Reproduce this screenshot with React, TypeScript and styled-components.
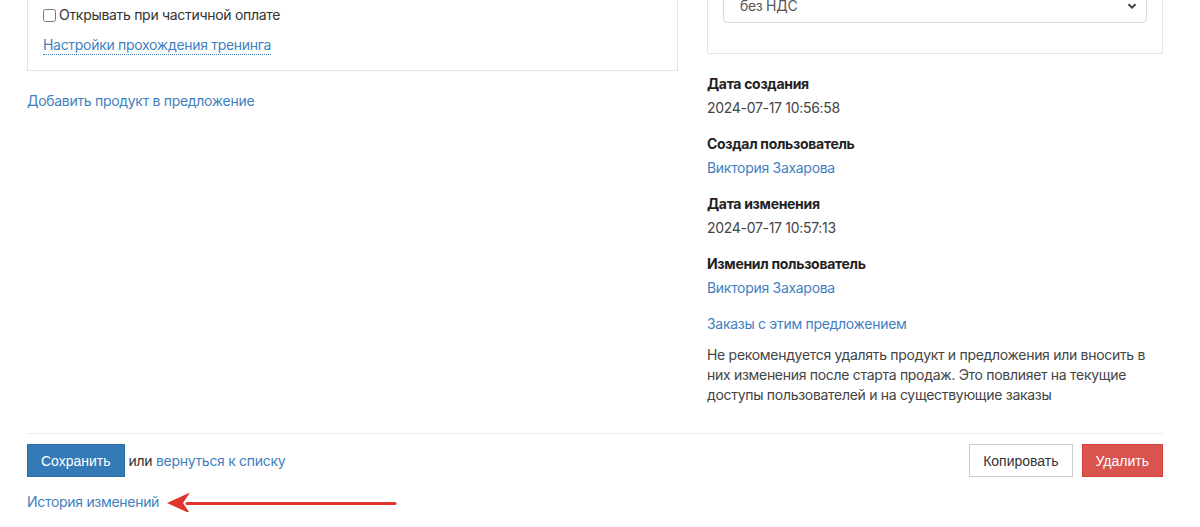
import React from "react";
import styled, { createGlobalStyle } from "styled-components";

const GlobalStyle = createGlobalStyle`
  html, body {
    margin: 0;
    padding: 0;
    background: #fff;
  }
  body {
    font-family: Inter, "Noto Sans", Arial, sans-serif;
    font-size: 14px;
    line-height: 20px;
    letter-spacing: -0.3px;
    color: #333;
    overflow: hidden;
  }
`;

const Page = styled.div`
  margin-top: -11px;
  padding: 0 37px 0 27px;
`;

const Columns = styled.div`
  display: grid;
  grid-template-columns: 651px 456px;
  column-gap: 29px;
  align-items: start;
`;

const Column = styled.div`
  display: flex;
  flex-direction: column;
`;

const Panel = styled.div<{ $padTop: number; $padBottom: number }>`
  border: 1px solid #e3e3e3;
  border-top: none;
  padding: ${({ $padTop }) => $padTop}px 15px ${({ $padBottom }) => $padBottom}px;
  display: flex;
  flex-direction: column;
`;

const CheckRow = styled.label`
  display: flex;
  align-items: center;
  gap: 3px;
  color: #333;
  cursor: pointer;

  input {
    width: 13px;
    height: 13px;
    margin: 0;
  }
`;

const Link = styled.a`
  color: #3f7fbf;
  text-decoration: none;
  cursor: pointer;
`;

const DottedLink = styled(Link)`
  align-self: flex-start;
  margin-top: 10px;
  border-bottom: 1px dotted #3f7fbf;
  line-height: 19px;
`;

const AddLink = styled(Link)`
  margin-top: 20px;
  align-self: flex-start;
`;

const Select = styled.div`
  height: 34px;
  border: 1px solid #d9d9d9;
  border-radius: 4px;
  box-sizing: border-box;
  display: flex;
  align-items: center;
  justify-content: space-between;
  padding: 0 8px 0 16px;
  color: #555;
`;

const InfoList = styled.div`
  margin-top: 20px;
  display: flex;
  flex-direction: column;
`;

const InfoItem = styled.div`
  display: flex;
  flex-direction: column;
  gap: 4px;
  margin-bottom: 16px;
`;

const InfoLabel = styled.div`
  font-weight: 700;
  color: #222;
`;

const InfoValue = styled.div`
  color: #444;
`;

const Note = styled.p`
  margin: 11px 0 0;
  color: #444;
  padding-right: 6px;
`;

const Divider = styled.hr`
  border: none;
  border-top: 1px solid #eee;
  margin: 28px 0 10px;
`;

const Actions = styled.div`
  display: flex;
  align-items: center;
  justify-content: space-between;
`;

const ActionGroup = styled.div`
  display: flex;
  align-items: center;
  gap: 9px;
`;

const SaveGroup = styled.div`
  display: flex;
  align-items: center;
  gap: 4px;
`;

const Button = styled.button<{ $variant: "primary" | "default" | "danger" }>`
  height: 33px;
  padding: 0 13px;
  box-sizing: border-box;
  font-family: "Liberation Sans", Arial, sans-serif;
  font-size: 14px;
  letter-spacing: 0;
  border-radius: 0;
  cursor: pointer;
  border: 1px solid
    ${({ $variant }) =>
      $variant === "primary" ? "#2e6da4" : $variant === "danger" ? "#d43f3a" : "#ccc"};
  background: ${({ $variant }) =>
    $variant === "primary" ? "#337ab7" : $variant === "danger" ? "#d9534f" : "#fff"};
  color: ${({ $variant }) => ($variant === "default" ? "#333" : "#fff")};
`;

const HistoryRow = styled.div`
  position: relative;
  margin-top: 15px;
`;

const Pointer = styled.svg`
  position: absolute;
  left: 140px;
  top: -1px;
`;

const Chevron = () => (
  <svg width="12" height="12" viewBox="0 0 12 12">
    <path d="M2.5 4.2 L6 7.7 L9.5 4.2" fill="none" stroke="#444" strokeWidth="2" />
  </svg>
);

const info = [
  { label: "Дата создания", value: "2024-07-17 10:56:58" },
  { label: "Создал пользователь", value: "Виктория Захарова", link: true },
  { label: "Дата изменения", value: "2024-07-17 10:57:13" },
  { label: "Изменил пользователь", value: "Виктория Захарова", link: true },
];

export default function App() {
  return (
    <>
      <GlobalStyle />
      <Page>
        <Columns>
          <Column>
            <Panel $padTop={16} $padBottom={15}>
              <CheckRow>
                <input type="checkbox" />
                Открывать при частичной оплате
              </CheckRow>
              <DottedLink>Настройки прохождения тренинга</DottedLink>
            </Panel>
            <AddLink>Добавить продукт в предложение</AddLink>
          </Column>
          <Column>
            <Panel $padTop={0} $padBottom={30}>
              <Select>
                без НДС
                <Chevron />
              </Select>
            </Panel>
            <InfoList>
              {info.map((item) => (
                <InfoItem key={item.label}>
                  <InfoLabel>{item.label}</InfoLabel>
                  {item.link ? <Link>{item.value}</Link> : <InfoValue>{item.value}</InfoValue>}
                </InfoItem>
              ))}
              <Link>Заказы с этим предложением</Link>
              <Note>
                Не рекомендуется удалять продукт и предложения или вносить в них изменения после
                старта продаж. Это повлияет на текущие доступы пользователей и на существующие
                заказы
              </Note>
            </InfoList>
          </Column>
        </Columns>
        <Divider />
        <Actions>
          <SaveGroup>
            <Button $variant="primary">Сохранить</Button>
            <span>
              или <Link>вернуться к списку</Link>
            </span>
          </SaveGroup>
          <ActionGroup>
            <Button $variant="default">Копировать</Button>
            <Button $variant="danger">Удалить</Button>
          </ActionGroup>
        </Actions>
        <HistoryRow>
          <Link>История изменений</Link>
          <Pointer width="232" height="24" viewBox="0 0 232 24">
            <path d="M228 12.5 L20 12.5" stroke="#e0332c" strokeWidth="3" strokeLinecap="round" />
            <path d="M0 12 L23 1.5 L16 12 L23 22.5 Z" fill="#e0332c" />
          </Pointer>
        </HistoryRow>
      </Page>
    </>
  );
}
